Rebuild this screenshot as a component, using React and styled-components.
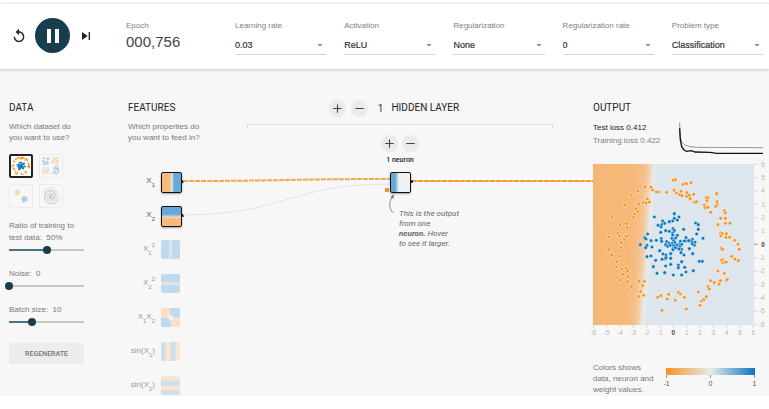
import React from "react";
import styled, { createGlobalStyle } from "styled-components";
import { MdReplay, MdPause, MdSkipNext, MdArrowDropDown } from "react-icons/md";
import { Plus, Minus } from "lucide-react";

const ORANGE = "#f59322";
const BLUE = "#0877bd";

const dropdowns = [
  { id: "learningRate", label: "Learning rate", options: ["0.03", "0.1", "0.3"] },
  { id: "activation", label: "Activation", options: ["ReLU", "Tanh", "Sigmoid"] },
  { id: "regularization", label: "Regularization", options: ["None", "L1", "L2"] },
  { id: "regularRate", label: "Regularization rate", options: ["0", "0.001", "0.01"] },
  { id: "problem", label: "Problem type", options: ["Classification", "Regression"] },
];

const features = [
  {
    name: "X1",
    label: <>X<sub>1</sub></>,
    fill: "linear-gradient(90deg, #f8ba7a 42%, #e3e3e0 50%, #a5c9e2 58%, #66a8d8 64%)",
    active: true,
  },
  {
    name: "X2",
    label: <>X<sub>2</sub></>,
    fill: "linear-gradient(180deg, #66a8d8 38%, #a5c9e2 46%, #ecd9c4 54%, #f8ba7a 62%)",
    active: true,
  },
  {
    name: "X1 squared",
    label: <>X<sub>1</sub><sup>2</sup></>,
    fill: "linear-gradient(90deg, #c0d9ec 38%, #d9e6ee 44%, #d9e6ee 56%, #c0d9ec 62%)",
  },
  {
    name: "X2 squared",
    label: <>X<sub>2</sub><sup>2</sup></>,
    fill: "linear-gradient(180deg, #c0d9ec 38%, #d9e6ee 44%, #d9e6ee 56%, #c0d9ec 62%)",
  },
  {
    name: "X1 times X2",
    label: <>X<sub>1</sub>X<sub>2</sub></>,
    fill: "radial-gradient(circle, #f4f4f4 8%, transparent 26%), conic-gradient(#c0d9ee 25%, #fcdfc4 0 50%, #c0d9ee 0 75%, #fcdfc4 0)",
  },
  {
    name: "sin X1",
    label: <>sin(X<sub>1</sub>)</>,
    fill: "linear-gradient(90deg, #cbdfec 18%, #f9e5d1 28%, #f9e5d1 45%, #cbdfec 55%, #cbdfec 72%, #f9e5d1 82%)",
  },
  {
    name: "sin X2",
    label: <>sin(X<sub>2</sub>)</>,
    fill: "linear-gradient(180deg, #f9e5d1 20%, #cbdfec 30%, #cbdfec 46%, #f9e5d1 56%, #f9e5d1 72%, #cbdfec 82%)",
  },
];

// Plot units: 483 across the heatmap, origin in the top left corner
const outerPoints = [
  [240, 49], [247, 47], [270, 61], [280, 59], [294, 56], [156, 68], [174, 70], [179, 78], [190, 84], [198, 84],
  [221, 85], [243, 79], [250, 87], [264, 82], [260, 92], [267, 95], [282, 86], [281, 97], [289, 94], [291, 104],
  [302, 91], [304, 115], [310, 113], [340, 101], [345, 101], [342, 110], [371, 89], [372, 113], [372, 122], [368, 127],
  [334, 123], [336, 131], [345, 130], [353, 145], [394, 140], [397, 147], [383, 163], [397, 163], [397, 178], [411, 178],
  [375, 182], [383, 207], [388, 209], [400, 209], [383, 216], [399, 220], [410, 220], [425, 229], [435, 241], [439, 256],
  [384, 253], [389, 256], [135, 81], [115, 94], [163, 105], [150, 115], [159, 117], [169, 114], [138, 119], [96, 124],
  [129, 134], [134, 143], [124, 151], [122, 160], [58, 160], [81, 182], [93, 179], [102, 179], [102, 190], [75, 208],
  [79, 216], [97, 216], [101, 217], [94, 227], [48, 219], [85, 235], [84, 250], [48, 257], [56, 273], [80, 276],
  [72, 293], [70, 309], [87, 315], [99, 312], [104, 320], [89, 331], [104, 338], [82, 349], [104, 353], [115, 368],
  [138, 352], [154, 352], [149, 365], [143, 383], [137, 397], [152, 394], [194, 400], [204, 395], [227, 391], [223, 405],
  [247, 409], [256, 385], [262, 390], [274, 400], [207, 439], [280, 435], [316, 384], [321, 424], [325, 411], [332, 407],
  [340, 398], [345, 368], [349, 375], [353, 350], [364, 356], [378, 361], [382, 350], [375, 321], [394, 328], [400, 349],
  [403, 346], [390, 287], [386, 289], [389, 296], [395, 295], [400, 294], [416, 277], [426, 285], [436, 290],
];

const innerPoints = [
  [184, 159], [244, 149], [244, 163], [258, 159], [253, 168], [239, 171], [229, 173], [209, 171], [215, 178], [206, 182],
  [195, 184], [204, 189], [308, 177], [316, 182], [316, 196], [240, 194], [244, 200], [272, 196], [203, 205], [218, 200],
  [229, 202], [239, 207], [311, 210], [164, 210], [155, 221], [159, 225], [174, 230], [190, 229], [205, 224], [206, 232],
  [221, 233], [239, 213], [253, 214], [237, 223], [248, 222], [242, 230], [279, 221], [278, 231], [298, 226], [296, 233],
  [306, 235], [330, 223], [262, 232], [274, 231], [287, 230], [229, 238], [238, 238], [246, 236], [260, 240], [142, 242],
  [162, 244], [158, 251], [177, 249], [218, 242], [224, 247], [232, 244], [242, 245], [252, 243], [266, 241], [260, 248],
  [240, 253], [304, 244], [298, 240], [289, 254], [266, 256], [254, 253], [200, 260], [210, 270], [219, 273], [216, 284],
  [207, 286], [233, 269], [233, 283], [219, 281], [264, 266], [273, 273], [258, 255], [299, 269], [162, 278], [174, 276],
  [188, 289], [181, 308], [192, 328], [215, 326], [241, 333], [266, 333], [279, 324], [301, 320], [319, 292], [328, 292],
  [266, 293], [256, 303], [256, 311], [275, 310], [233, 301], [218, 306], [240, 257], [247, 251],
];

const ticks = [-6, -5, -4, -3, -2, -1, 0, 1, 2, 3, 4, 5, 6];

// Small repeatable noise so the thumbnails never change between renders
const noise = (i) => {
  const v = Math.sin(i * 127.1 + 3.7) * 43758.5453;
  return v - Math.floor(v);
};

const buildDataset = (kind) => {
  const dots = [];
  for (let i = 0; i < 110; i++) {
    const a = noise(i) * Math.PI * 2;
    const r = noise(i + 500);
    const even = i % 2 === 0;
    if (kind === "circle") {
      const d = even ? 17 + r * 5 : r * 10;
      dots.push([24 + d * Math.cos(a), 24 + d * Math.sin(a), even ? ORANGE : BLUE]);
    } else if (kind === "xor") {
      const x = noise(i + 50) * 17 + 4;
      const y = r * 17 + 4;
      const right = i % 4 > 1;
      dots.push([right ? x + 22 : x, even === right ? y : y + 22, even ? ORANGE : BLUE]);
    } else if (kind === "gauss") {
      const c = even ? 16 : 32;
      dots.push([c + r * 7 * Math.cos(a), c + r * 7 * Math.sin(a), even ? ORANGE : BLUE]);
    } else {
      const t = i / 110;
      const turn = t * Math.PI * 3.4 + (even ? 0 : Math.PI);
      dots.push([24 + t * 21 * Math.sin(turn), 24 + t * 21 * Math.cos(turn), even ? ORANGE : BLUE]);
    }
  }
  return dots;
};

const datasets = ["circle", "xor", "gauss", "spiral"].map((kind) => ({
  kind,
  dots: buildDataset(kind),
}));

const sliders = [
  { id: "ratio", text: "Ratio of training to test data:", value: 50, shown: "50%", min: 0, max: 100 },
  { id: "noise", text: "Noise:", value: 0, shown: "0", min: 0, max: 50 },
  { id: "batch", text: "Batch size:", value: 10, shown: "10", min: 1, max: 30 },
];

const Thumbnail = ({ dots }) => (
  <svg viewBox="0 0 48 48" width="20" height="20" aria-hidden="true">
    {dots.map(([x, y, color], i) => (
      <circle key={i} cx={x} cy={y} r="1.8" fill={color} />
    ))}
  </svg>
);

const Heatmap = () => (
  <svg viewBox="0 0 528 528" width="176" height="176" role="img" aria-label="Network output">
    <defs>
      <linearGradient id="surface" gradientUnits="userSpaceOnUse" x1="0" y1="0" x2="200" y2="14">
        <stop offset="0" stopColor="#f6b776" />
        <stop offset="0.62" stopColor="#f6b878" />
        <stop offset="0.76" stopColor="#f5bf88" />
        <stop offset="0.84" stopColor="#f3cda6" />
        <stop offset="0.89" stopColor="#ece2d8" />
        <stop offset="0.92" stopColor="#e8eaec" />
        <stop offset="0.96" stopColor="#dce6ec" />
      </linearGradient>
    </defs>
    <rect width="483" height="483" fill="url(#surface)" />
    <g stroke="#fff" strokeOpacity="0.7" strokeWidth="2">
      {outerPoints.map(([x, y], i) => (
        <circle key={i} cx={x} cy={y} r="5.5" fill={ORANGE} />
      ))}
      {innerPoints.map(([x, y], i) => (
        <circle key={i} cx={x} cy={y} r="5.5" fill={BLUE} />
      ))}
    </g>
    {ticks.map((t) => {
      const at = 241 + t * 40;
      const zero = t === 0;
      return (
        <g key={t} fill={zero ? "#444" : "#b5b5b5"} fontSize="19" fontWeight={zero ? 700 : 400}>
          <path d={`M${at} 483v9`} stroke="#d5d5d5" strokeWidth="3" />
          <path d={`M483 ${482 - at}h11`} stroke={zero ? "#999" : "#d5d5d5"} strokeWidth="3" />
          <text x={at} y="513" textAnchor="middle">{t}</text>
          <text x="515" y={489 - at} textAnchor="end">{t}</text>
        </g>
      );
    })}
  </svg>
);

const App = () => {
  return (
    <>
      <GlobalStyle />
      <TopBar>
        <Controls>
          <IconButton aria-label="Reset"><MdReplay size={16} /></IconButton>
          <PlayButton aria-label="Pause"><MdPause size={24} /></PlayButton>
          <IconButton aria-label="Step"><MdSkipNext size={16} /></IconButton>
        </Controls>
        <Epoch>
          <FieldLabel as="span">Epoch</FieldLabel>
          <EpochValue>000,756</EpochValue>
        </Epoch>
        <Fields>
          {dropdowns.map(({ id, label, options }) => (
            <Field key={id}>
              <FieldLabel htmlFor={id}>{label}</FieldLabel>
              <SelectBox>
                <Select id={id}>
                  {options.map((o) => (
                    <option key={o}>{o}</option>
                  ))}
                </Select>
                <MdArrowDropDown size={12} />
              </SelectBox>
            </Field>
          ))}
        </Fields>
      </TopBar>

      <Main>
        <DataColumn>
          <Title>DATA</Title>
          <Hint>Which dataset do you want to use?</Hint>
          <Datasets>
            {datasets.map(({ kind, dots }, i) => (
              <Dataset key={kind} aria-label={kind} $active={i === 0}>
                <Thumbnail dots={dots} />
              </Dataset>
            ))}
          </Datasets>
          <Sliders>
            {sliders.map(({ id, text, value, shown, min, max }) => (
              <SliderField key={id}>
                <label htmlFor={id}>{`${text}\u00a0 ${shown}`}</label>
                <Slider
                  id={id}
                  type="range"
                  min={min}
                  max={max}
                  defaultValue={value}
                  style={{ "--fill": `${((value - min) / (max - min)) * 100}%` }}
                />
              </SliderField>
            ))}
          </Sliders>
          <Regenerate>REGENERATE</Regenerate>
        </DataColumn>

        <FeatureColumn>
          <Title>FEATURES</Title>
          <Hint>Which properties do you want to feed in?</Hint>
          <FeatureList>
            {features.map(({ name, label, fill, active }) => (
              <FeatureRow key={name}>
                <FeatureLabel $active={active}>{label}</FeatureLabel>
                <Node aria-label={name} $fill={fill} $active={active} />
              </FeatureRow>
            ))}
          </FeatureList>
        </FeatureColumn>

        <HiddenColumn>
          <LayerHeader>
            <RoundButton aria-label="Add layer"><Plus size={13} /></RoundButton>
            <RoundButton aria-label="Remove layer"><Minus size={13} /></RoundButton>
            <LayerCount>1</LayerCount>
            <Title>HIDDEN LAYER</Title>
          </LayerHeader>
          <Bracket />
          <NeuronControls>
            <RoundButton aria-label="Add neuron"><Plus size={13} /></RoundButton>
            <RoundButton aria-label="Remove neuron"><Minus size={13} /></RoundButton>
          </NeuronControls>
          <NeuronCount>1 neuron</NeuronCount>
          <Network>
            <InputLinks viewBox="0 0 206 60" preserveAspectRatio="none" aria-hidden="true">
              <path d="M0 9C100 9 106 7 206 7" stroke="#f8a64c" strokeWidth="2" strokeDasharray="5 1" />
              <path d="M0 43C100 43 106 12 206 12" stroke="#d9e5ec" strokeWidth="1" />
            </InputLinks>
            <OutputLink />
            <NeuronNode>
              <Node
                aria-label="Neuron"
                $active
                $fill="linear-gradient(90deg, #66a8d8 22%, #9cc4e0 30%, #dfe9ef 38%, #eff1f2 46%)"
              />
              <Bias />
            </NeuronNode>
            <Callout>
              <svg viewBox="0 0 18 60" width="6" height="20" aria-hidden="true">
                <path d="M12 56C-2 42 0 22 11 8" fill="none" stroke="#888" strokeWidth="3" />
                <path d="M14 1L4 9L14 14Z" fill="#777" />
              </svg>
              <p>
                This is the output
                <br />
                from one
                <br />
                <b>neuron.</b> Hover
                <br />
                to see it larger.
              </p>
            </Callout>
          </Network>
        </HiddenColumn>

        <OutputColumn>
          <Title>OUTPUT</Title>
          <LossRow>
            <div>
              <Loss $dark>Test loss 0.412</Loss>
              <Loss>Training loss 0.422</Loss>
            </div>
            <svg viewBox="0 0 252 105" width="84" height="35" aria-hidden="true">
              <path
                d="M2 4L3 45L8 62L15 71L33 77L53 79L252 80"
                fill="none"
                stroke="#999"
                strokeWidth="3"
              />
              <path
                d="M2 22L4 57L8 77L15 87L23 91L38 89L48 93L93 94L113 97L252 97"
                fill="none"
                stroke="#111"
                strokeWidth="4"
              />
            </svg>
          </LossRow>
          <Heatmap />
          <Legend>
            <Hint>Colors shows data, neuron and weight values.</Hint>
            <Scale>
              <ScaleBar />
              <ScaleLabels>
                <span>-1</span>
                <span>0</span>
                <span>1</span>
              </ScaleLabels>
            </Scale>
          </Legend>
        </OutputColumn>
      </Main>
    </>
  );
};

const GlobalStyle = createGlobalStyle`
  * {
    box-sizing: border-box;
  }

  body {
    margin: 0;
    background: #fff;
    color: #777;
    font-family: "Liberation Sans", Arial, sans-serif;
    font-size: 8px;
  }

  button, select, input {
    margin: 0;
    padding: 0;
    font-family: inherit;
  }

  p, h2 {
    margin: 0;
  }

  svg {
    display: block;
    flex: none;
    overflow: visible;
  }
`;

const TopBar = styled.header`
  position: relative;
  display: flex;
  align-items: flex-start;
  margin-top: 3px;
  padding: 14px 6px 14px 11px;
  border-top: 1px solid #eee;
  background: #fff;
  box-shadow: 0 1px 3px rgba(0, 0, 0, 0.2);
`;

const Controls = styled.div`
  display: flex;
  align-items: center;
  gap: 8px;
  width: 115px;
`;

const IconButton = styled.button`
  border: none;
  background: transparent;
  color: #222;
  cursor: pointer;
`;

const PlayButton = styled.button`
  display: flex;
  align-items: center;
  justify-content: center;
  width: 35px;
  height: 35px;
  border: none;
  border-radius: 50%;
  background: #183d4e;
  color: #fff;
  cursor: pointer;
`;

const Epoch = styled.div`
  display: flex;
  flex-direction: column;
  width: 109px;
`;

const EpochValue = styled.span`
  font-size: 15px;
  line-height: 20px;
  color: #444;
`;

const Fields = styled.div`
  display: flex;
  flex: 1;
  gap: 18px;
`;

const Field = styled.div`
  display: flex;
  flex: 1;
  flex-direction: column;
  gap: 5px;
  min-width: 0;
`;

const FieldLabel = styled.label`
  padding-top: 2px;
  line-height: 12px;
  white-space: nowrap;
  color: #808080;
`;

const SelectBox = styled.div`
  display: flex;
  align-items: center;
  padding-bottom: 2px;
  border-bottom: 1px solid #d5d5d5;
  color: #888;
`;

const Select = styled.select`
  flex: 1;
  min-width: 0;
  height: 15px;
  border: none;
  outline: none;
  appearance: none;
  background: transparent;
  font-size: 9px;
  color: #333;
  -webkit-text-stroke: 0.2px #333;
`;

const Main = styled.main`
  display: flex;
  padding: 31px 6px 1px 9px;
  background: #f7f7f7;
`;

const Title = styled.h2`
  font-family: Roboto, sans-serif;
  font-size: 10px;
  font-weight: 400;
  line-height: 16px;
  white-space: nowrap;
  color: #222;
`;

const Hint = styled.p`
  width: 76px;
  line-height: 11px;
`;

const DataColumn = styled.section`
  display: flex;
  flex-direction: column;
  align-items: flex-start;
  width: 119px;

  ${Hint} {
    margin-top: 5px;
  }
`;

const Datasets = styled.div`
  display: grid;
  grid-template-columns: 24px 24px;
  gap: 6px;
  margin-top: 11px;
`;

const Dataset = styled.button`
  display: flex;
  align-items: center;
  justify-content: center;
  height: 24px;
  border: ${(p) => (p.$active ? "2px solid #222" : "1px solid #ebebeb")};
  border-radius: 2px;
  background: ${(p) => (p.$active ? "#fff" : "transparent")};
  cursor: pointer;

  svg {
    opacity: ${(p) => (p.$active ? 1 : 0.3)};
  }
`;

const Sliders = styled.div`
  display: flex;
  flex-direction: column;
  gap: 14px;
  width: 75px;
  margin-top: 12px;
`;

const SliderField = styled.div`
  display: flex;
  flex-direction: column;
  gap: 2px;
  line-height: 12px;
`;

/* The thumb hangs over both ends of the track by half its width */
const Slider = styled.input`
  height: 8px;
  margin: 0 -4px;
  appearance: none;
  background: linear-gradient(90deg, #4d6f7f var(--fill), #c8c8c8 var(--fill)) center / calc(100% - 8px) 2px no-repeat;

  &::-webkit-slider-thumb {
    width: 8px;
    height: 8px;
    appearance: none;
    border-radius: 50%;
    background: #183d4e;
  }
`;

const Regenerate = styled.button`
  width: 75px;
  height: 21px;
  margin-top: 17px;
  border: none;
  border-radius: 2px;
  background: #ececec;
  font-family: Roboto, sans-serif;
  font-size: 7px;
  font-weight: 500;
  color: #777;
  cursor: pointer;
`;

const FeatureColumn = styled.section`
  width: 119px;

  ${Hint} {
    margin-top: 5px;
  }
`;

const FeatureList = styled.div`
  margin-top: 29px;
`;

const FeatureRow = styled.div`
  display: flex;
  gap: 6px;
  height: 34px;

  &:last-child {
    height: 19px;
  }
`;

const FeatureLabel = styled.span`
  width: 27px;
  line-height: 18px;
  text-align: right;
  white-space: nowrap;
  color: ${(p) => (p.$active ? "#555" : "#999")};

  sub,
  sup {
    position: relative;
    font-size: 6px;
    line-height: 0;
    vertical-align: baseline;
  }

  sub {
    top: 4px;
  }

  sup {
    top: -4px;
  }
`;

const Node = styled.button`
  position: relative;
  width: ${(p) => (p.$active ? 21 : 19)}px;
  height: ${(p) => (p.$active ? 21 : 19)}px;
  border: ${(p) => (p.$active ? "1px solid #111" : "none")};
  border-radius: 2px;
  background: ${(p) => p.$fill};
  box-shadow: ${(p) => (p.$active ? "0 1px 2px rgba(0, 0, 0, 0.35)" : "none")};
  cursor: pointer;

  &::after {
    content: "";
    display: ${(p) => (p.$active ? "block" : "none")};
    position: absolute;
    top: 7px;
    right: -3px;
    width: 3px;
    height: 3px;
    border-radius: 50%;
    background: #111;
  }
`;

const HiddenColumn = styled.section`
  display: flex;
  flex: 1;
  flex-direction: column;
  align-items: center;
  min-width: 0;
  margin-right: 40px;
`;

const LayerHeader = styled.div`
  display: flex;
  align-items: center;
  height: 16px;
  padding-right: 12px;
  gap: 5px;
`;

const RoundButton = styled.button`
  display: flex;
  align-items: center;
  justify-content: center;
  width: 17px;
  height: 17px;
  border: none;
  border-radius: 50%;
  background: #ebebeb;
  color: #444;
  cursor: pointer;
`;

const LayerCount = styled.span`
  padding: 0 3px 0 5px;
  font-family: Roboto, sans-serif;
  font-size: 10px;
  color: #333;
`;

const Bracket = styled.div`
  align-self: stretch;
  height: 4px;
  margin-top: 8px;
  border: 1px solid #ddd;
  border-bottom: none;
`;

const NeuronControls = styled.div`
  display: flex;
  gap: 4px;
  margin-top: 7px;
`;

const NeuronCount = styled.div`
  margin-top: 3px;
  font-family: Roboto, sans-serif;
  font-size: 7px;
  font-weight: 500;
  line-height: 10px;
  color: #222;
`;

const Network = styled.div`
  position: relative;
  display: flex;
  flex-direction: column;
  align-items: center;
  align-self: stretch;
  margin-top: 7px;
`;

const InputLinks = styled.svg`
  position: absolute;
  top: 0;
  left: -64px;
  width: calc(50% + 54px);
  height: 60px;
  fill: none;

  path {
    vector-effect: non-scaling-stroke;
  }
`;

const OutputLink = styled.div`
  position: absolute;
  top: 8px;
  left: 50%;
  right: -40px;
  height: 2px;
  background: repeating-linear-gradient(90deg, #f59a35 0 5px, #fbd0a0 5px 6px);
`;

const NeuronNode = styled.div`
  position: relative;
  display: flex;
`;

const Bias = styled.span`
  position: absolute;
  left: -5px;
  bottom: 1px;
  width: 4px;
  height: 4px;
  background: #f59322;
`;

const Callout = styled.div`
  display: flex;
  gap: 4px;
  margin-top: 1px;
  padding-left: 50px;
  font-family: Roboto, sans-serif;
  font-size: 8px;
  font-style: italic;
  line-height: 10px;
  color: #666;

  p {
    width: 62px;
    padding-top: 15px;
    white-space: nowrap;
  }
`;

const OutputColumn = styled.section`
  width: 170px;
`;

const LossRow = styled.div`
  display: flex;
  justify-content: space-between;
  height: 38px;
  margin: 5px 0;
`;

const Loss = styled.p`
  line-height: 13px;
  white-space: nowrap;
  color: ${(p) => (p.$dark ? "#222" : "#808080")};
`;

const Legend = styled.div`
  display: flex;
  gap: 7px;
  margin-top: 22px;

  ${Hint} {
    width: 66px;
  }
`;

const Scale = styled.div`
  flex: 1;
  margin-right: 8px;
  padding-top: 6px;
`;

const ScaleBar = styled.div`
  height: 7px;
  background: linear-gradient(90deg, #f59322, #e8eaeb 50%, #0877bd);
`;

const ScaleLabels = styled.div`
  display: flex;
  justify-content: space-between;
  margin: 0 -4px;

  span {
    width: 9px;
    padding-top: 4px;
    background: linear-gradient(#999, #999) top / 1px 3px no-repeat;
    font-size: 7px;
    line-height: 10px;
    text-align: center;
    color: #555;
  }
`;

export default App;
